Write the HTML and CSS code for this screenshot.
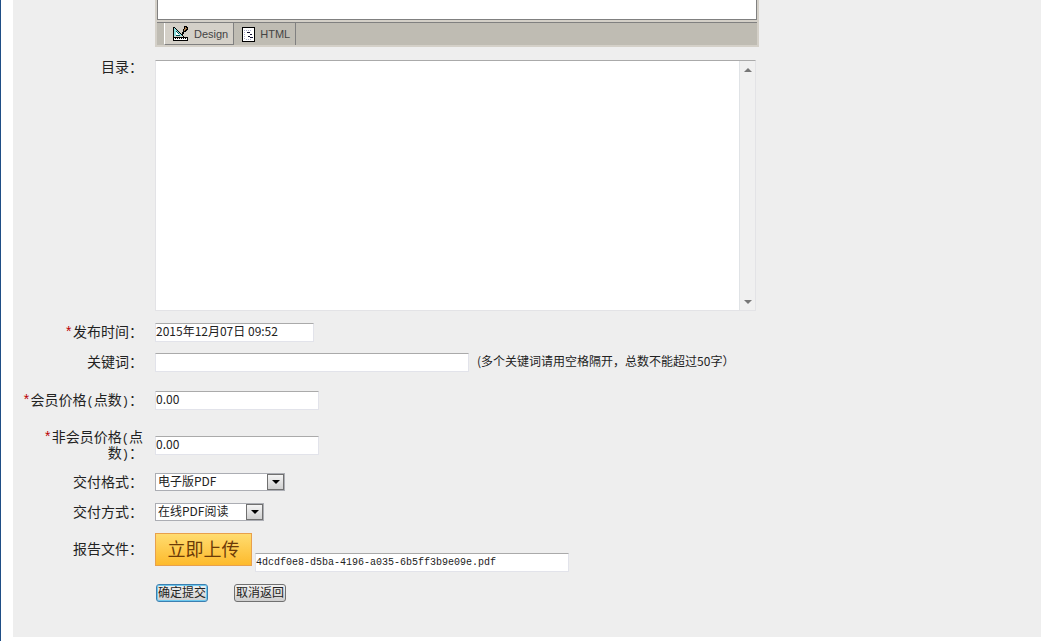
FILE: index.html
```html
<!DOCTYPE html>
<html lang="zh-CN">
	<head>
		<meta charset="UTF-8">
		<title>报告编辑</title>
		<link rel="stylesheet" href="styles.css">
	</head>
	<body>
		<form class="panel" onsubmit="return false">
			<!--编辑器底部-->
			<div class="row row-editor">
				<div class="label"></div>
				<div class="editor">
					<div class="editor-body"></div>
					<div class="tabs">
						<button type="button" class="tab active">
							<svg width="16" height="16" viewBox="0 0 16 16" shape-rendering="crispEdges">
								<path d="M1 1v9h9z" fill="#8ee0e0"/>
								<path d="M0 1h1v10H0zM1 1h1v1H1zM2 2h1v1H2zM3 3h1v1H3zM4 4h1v1H4zM5 5h1v1H5zM6 6h1v1H6zM7 7h1v1H7zM8 8h1v1H8zM9 9h1v1H9zM10 10h1v1H10z" fill="#000"/>
								<path d="M3 6h1v1h1v1h1v1H3z" fill="#fff"/>
								<path d="M3 5h1v1H3zM4 6h1v1H4zM5 7h1v1H5zM3 9h4v1H3z" fill="#055"/>
								<path d="M11 0h3v1h1v3h-1v1h-1v1h-2v2h-1v1H9V6h1V3h1z" fill="#000"/>
								<path d="M12 1h1v1h1v1h-1v1h-1v1h-1V3h1z" fill="#b08050"/>
								<path d="M0 11h15v4H0z" fill="#000"/>
								<path d="M1 12h1v1h1v-1h1v1h1v-1h1v1h1v-1h1v1h1v-1h1v1h1v-1h1v1h1v-1h1v2H1z" fill="#fff"/>
							</svg>
							Design
						</button>
						<button type="button" class="tab">
							<svg width="13" height="15" viewBox="0 0 13 15" shape-rendering="crispEdges">
								<rect x="0" y="0" width="13" height="15" fill="#000"/>
								<rect x="1" y="1" width="11" height="13" fill="#fff"/>
								<path d="M2 3h1v1H2zM4 3h1v1H4zM6 3h1v1H6zM8 3h1v1H8zM2 5h1v1H2zM2 7h1v1H2zM2 9h1v1H2zM2 11h1v1H2zM4 12h1v1H4zM6 12h1v1H6zM8 12h1v1H8z" fill="#aac"/>
								<path d="M5 5h3v1H5zM8 7h2v1H8zM6 9h2v1H6zM8 10h3v1H8z" fill="#113"/>
							</svg>
							HTML
						</button>
					</div>
				</div>
			</div>
			<div class="row row-catalog">
				<label class="label" for="catalog">目录：</label>
				<div class="catalog">
					<textarea id="catalog"></textarea>
					<div class="scroll"><i class="up"></i><i class="down"></i></div>
				</div>
			</div>
			<div class="row">
				<label class="label" for="time"><b class="en">*</b>发布时间：</label>
				<input class="text w-time" id="time" type="text" value="2015年12月07日 09:52">
			</div>
			<div class="row">
				<label class="label" for="keyword">关键词：</label>
				<input class="text w-long" id="keyword" type="text">
				<span class="tip">(多个关键词请用空格隔开，总数不能超过50字）</span>
			</div>
			<div class="row row-price">
				<label class="label" for="price"><b class="en">*</b>会员价格<span class="en">(</span>点数<span class="en">)</span>：</label>
				<input class="text w-price" id="price" type="text" value="0.00">
			</div>
			<div class="row row-price2">
				<label class="label" for="price2"><b class="en">*</b>非会员价格<span class="en">(</span>点数<span class="en">)</span>：</label>
				<input class="text w-price" id="price2" type="text" value="0.00">
			</div>
			<div class="row">
				<label class="label" for="format">交付格式：</label>
				<div class="select w-format">
					<select id="format"><option>电子版PDF</option></select>
				</div>
			</div>
			<div class="row">
				<label class="label" for="way">交付方式：</label>
				<div class="select w-way">
					<select id="way"><option>在线PDF阅读</option></select>
				</div>
			</div>
			<div class="row row-file">
				<label class="label" for="file">报告文件：</label>
				<button type="button" class="upload">立即上传</button>
				<input class="text w-long file" id="file" type="text" value="4dcdf0e8-d5ba-4196-a035-6b5ff3b9e09e.pdf">
			</div>
			<div class="row row-btns">
				<div class="label"></div>
				<button type="submit" class="btn default">确定提交</button>
				<button type="button" class="btn">取消返回</button>
			</div>
		</form>
	</body>
</html>
```

FILE: styles.css
```css
*, *::before{
	margin: 0;
	padding: 0;
	box-sizing: border-box;
}
body{
	border-left: 1px solid #1f4e86;
	padding: 0 0 4px 12px;
	background: #fff;
	color: #222;
	font: 12px/16px "Noto Sans CJK SC", sans-serif;
}
input, select, textarea, button{
	font: inherit;
	color: inherit;
}
.panel{
	padding-bottom: 23px;
	background: #eee;
}
.row{
	display: flex;
	align-items: center;
	height: 30px;
}
.label{
	flex: none;
	width: 130px;
	padding: 0 0 3px 4px;
	margin-right: 12px;
	font-size: 14px;
	text-align: right;
}
/*半角字符*/
.en{
	font: 12px/1px "Liberation Mono", monospace;
}
b.en{
	color: #b00;
	font-size: 14px;
}

/*编辑器*/
.row-editor{
	height: 47px;
}
.editor{
	width: 604px;
	padding: 0 2px 2px;
	background: #d4d0c8;
}
.editor-body{
	height: 20px;
	border: 1px solid #808080;
	border-top: 0;
	background: #fff;
}
.tabs{
	display: flex;
	height: 23px;
	margin-top: 2px;
	padding-left: 7px;
	border-top: 1px solid #808080;
	background: #bfbcb3;
}
.tab{
	display: flex;
	align-items: center;
	gap: 5px;
	padding: 0 5px 0 8px;
	border: 0;
	border-right: 1px solid #808080;
	background: none;
	color: #444;
	font: 11px "Liberation Sans", Arial, sans-serif;
}
.tab.active{
	border-left: 1px solid #fff;
	border-bottom: 1px solid #808080;
	background: #d4d0c8;
}

/*目录*/
.row-catalog{
	align-items: flex-start;
	height: 270px;
	padding-top: 11px;
}
.catalog{
	display: flex;
	width: 601px;
	height: 251px;
	margin-top: 2px;
	border: 1px solid #e3e3e6;
	border-top-color: #aaa;
	background: #fff;
}
.catalog textarea{
	flex: 1;
	border: 0;
	resize: none;
	outline: none;
}
.scroll{
	display: flex;
	flex-direction: column;
	justify-content: space-between;
	align-items: center;
	width: 16px;
	padding: 7px 0 6px;
	border-left: 1px solid #e0e3e6;
	background: #f0f0f0;
}
.up, .down{
	border: 4px solid transparent;
}
.up{
	border-top: 0;
	border-bottom-color: #777;
}
.down{
	border-bottom: 0;
	border-top-color: #777;
}

/*输入框*/
.text{
	height: 19px;
	padding: 0 0 3px;
	border: 1px solid #e2e3ea;
	border-top-color: #aaa;
	background: #fff;
	line-height: 14px;
}
.w-time{
	width: 159px;
}
.w-long{
	width: 314px;
}
.w-price{
	width: 164px;
}
.tip{
	margin-left: 8px;
	padding-bottom: 2px;
}
.row-price{
	height: 46px;
}
.row-price2{
	height: 44px;
}

/*下拉框*/
.select{
	position: relative;
	height: 18px;
	border: 1px solid #abadb3;
	background: #fff;
}
.select select{
	display: block;
	width: 100%;
	height: 16px;
	padding: 0 0 3px 2px;
	border: 0;
	background: none;
	appearance: none;
	line-height: 13px;
}
.select::before{
	content: "";
	position: absolute;
	top: 0;
	right: 0;
	width: 17px;
	height: 16px;
	border: 1px solid #707070;
	background: linear-gradient(#f4f4f4, #d0d0d0);
	pointer-events: none;
}
.select::after{
	content: "";
	position: absolute;
	top: 6px;
	right: 4px;
	border: 4px solid transparent;
	border-top-color: #000;
	border-bottom: 0;
	pointer-events: none;
}
.w-format{
	width: 130px;
}
.w-way{
	width: 109px;
}

/*上传*/
.row-file{
	height: 45px;
}
.upload{
	width: 97px;
	height: 33px;
	margin-right: 3px;
	padding-bottom: 3px;
	border: 1px solid #e8a04c;
	background: linear-gradient(#ffdc70, #fdba2c);
	color: #6b3a08;
	font-size: 18px;
	line-height: 24px;
}
.file{
	align-self: flex-end;
	padding-bottom: 1px;
	font: 10px/16px "Liberation Mono", monospace;
}

/*按钮*/
.row-btns{
	height: 42px;
}
.btn{
	width: 52px;
	height: 18px;
	margin: 0 25px 0 1px;
	padding-bottom: 3px;
	border: 1px solid #707070;
	border-radius: 3px;
	background: linear-gradient(#f2f2f2, #cfcfcf);
	line-height: 13px;
}
.btn.default{
	border-color: #3c7fb1;
	box-shadow: inset 0 0 0 1px #6cc8ee;
}
```
